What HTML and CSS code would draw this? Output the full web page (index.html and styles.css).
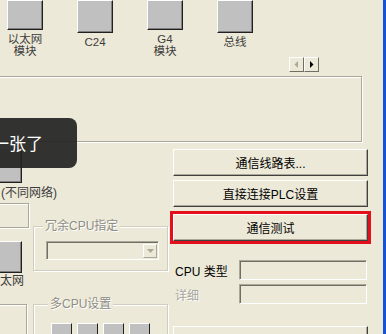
FILE: index.html
```html
<!DOCTYPE html>
<html>
<head>
<meta charset="UTF-8">
<title>通信设置</title>
<link rel="stylesheet" href="styles.css">
</head>
<body>

<div class="window">

	<div class="modules">
		<div class="module"><div class="chip"></div><div class="mod-label">以太网<br>模块</div></div>
		<div class="module"><div class="chip"></div><div class="mod-label">C24</div></div>
		<div class="module"><div class="chip"></div><div class="mod-label">G4<br>模块</div></div>
		<div class="module"><div class="chip"></div><div class="mod-label">总线</div></div>
	</div>

	<div class="scroller">
		<span class="sbtn"><svg width="5" height="7" viewBox="0 0 5 7"><path d="M4 0 L4 7 L0.5 3.5 Z" fill="#ACA899"/></svg></span>
		<span class="sbtn"><svg width="5" height="7" viewBox="0 0 5 7"><path d="M1 0 L1 7 L4.5 3.5 Z" fill="#000"/></svg></span>
	</div>

	<div class="panel"></div>

	<div class="lower">
		<div class="col-left">
			<div class="chip side-chip"></div>
			<div class="side-label">(不同网络)</div>
			<div class="side-frame"></div>
			<div class="chip side-chip2"></div>
			<div class="side-label2">以太网</div>
			<div class="side-frame frame2"></div>
		</div>

		<div class="col-mid">
			<div class="group">
				<span class="group-title">冗余CPU指定</span>
				<div class="combo"><span class="combo-btn"><svg width="7" height="4" viewBox="0 0 7 4"><path d="M0 0 L7 0 L3.5 4 Z" fill="#ACA899"/></svg></span></div>
			</div>
			<div class="group group2">
				<span class="group-title">多CPU设置</span>
				<div class="cpus">
					<span class="cpu"></span><span class="cpu"></span><span class="cpu"></span><span class="cpu"></span>
				</div>
			</div>
		</div>

		<div class="col-right">
			<button class="btn" type="button">通信线路表...</button>
			<button class="btn btn-gap1" type="button">直接连接PLC设置</button>
			<button class="btn btn-gap2 btn-mark" type="button">通信测试</button>
			<div class="field-row">
				<span class="field-label">CPU 类型</span>
				<span class="textbox"></span>
			</div>
			<div class="field-row row2">
				<span class="field-label off">详细</span>
				<span class="textbox"></span>
			</div>
			<button class="btn btn-last" type="button">系统图像</button>
		</div>
	</div>

	<div class="tip">一张了</div>

</div>

</body>
</html>
```

FILE: styles.css
```css
body {
	margin: 0;
	overflow: hidden;
	font-family: "Liberation Sans", "Noto Sans CJK SC", sans-serif;
	font-size: 12px;
}

.window {
	position: relative;
	width: 383px;
	height: 334px;
	background: #ECE9D8;
	border-right: 3px solid #1553D6;
	overflow: hidden;
}

/* top module strip */
.modules {
	display: flex;
	height: 57px;
	margin-left: -10px;
}

.module {
	width: 70px;
	display: flex;
	flex-direction: column;
	align-items: center;
}

.chip {
	box-sizing: border-box;
	width: 36px;
	height: 33px;
	background: #C0C0C0;
	border-top: 1px solid #fff;
	border-left: 1px solid #fff;
	border-right: 1px solid #202020;
	border-bottom: 1px solid #202020;
	box-shadow: inset -1px -1px 0 #808080;
}

.mod-label {
	margin-top: 3px;
	font-size: 11.5px;
	line-height: 12px;
	text-align: center;
	color: #3c3c3c;
}

.scroller {
	display: flex;
	justify-content: flex-end;
	height: 15px;
	padding-right: 64px;
}

.sbtn {
	box-sizing: border-box;
	width: 15px;
	height: 15px;
	display: flex;
	align-items: center;
	justify-content: center;
	background: #ECE9D8;
	border: 1px solid;
	border-color: #fff #716F64 #716F64 #fff;
}

.panel {
	box-sizing: border-box;
	width: 364px;
	height: 66px;
	margin: 4px 0 0 -2px;
	border: 1px solid #ACA899;
	box-shadow: inset 1px 1px 0 #fff, 1px 1px 0 #fff;
}

/* lower part */
.lower {
	display: flex;
	margin-top: 1px;
}

.col-left {
	width: 33px;
	flex-shrink: 0;
}

.side-chip {
	height: 35px;
	margin: 5px 0 0 -14px;
}

.side-label {
	margin: 4px 0 0 1px;
	line-height: 12px;
	white-space: nowrap;
	color: #3c3c3c;
}

.side-frame {
	box-sizing: border-box;
	width: 40px;
	height: 25px;
	margin: 4px 0 0 -11px;
	border: 1px solid #ACA899;
	box-shadow: inset 1px 1px 0 #fff, 1px 1px 0 #fff;
}

.side-chip2 {
	height: 32px;
	margin: 13px 0 0 -14px;
}

.side-label2 {
	margin: 2px 0 0 -12px;
	line-height: 12px;
	white-space: nowrap;
	color: #3c3c3c;
}

.frame2 {
	width: 38px;
	height: 40px;
	margin-top: 17px;
}

.col-mid {
	width: 135px;
	flex-shrink: 0;
}

.group {
	box-sizing: border-box;
	width: 135px;
	margin-top: 83px;
	padding: 0 7px 10px 12px;
	border: 1px solid #D0CDBE;
	box-shadow: inset 1px 1px 0 #fff, 1px 1px 0 #fff;
}

.group-title {
	display: block;
	width: fit-content;
	margin: -7px 0 0 -3px;
	padding: 0 2px;
	line-height: 12px;
	background: #ECE9D8;
	color: #8E8D85;
	text-shadow: 1px 1px 0 #fff;
}

.combo {
	box-sizing: border-box;
	width: 113px;
	height: 19px;
	margin-top: 9px;
	display: flex;
	justify-content: flex-end;
	align-items: center;
	padding-right: 1px;
	border: 1px solid;
	border-color: #ACA899 #fff #fff #ACA899;
	box-shadow: inset 1px 1px 0 #716F64;
}

.combo-btn {
	box-sizing: border-box;
	width: 14px;
	height: 14px;
	display: flex;
	align-items: center;
	justify-content: center;
	border: 1px solid;
	border-color: #fff #ACA899 #ACA899 #fff;
}

.group2 {
	margin-top: 33px;
	height: 60px;
	padding-left: 17px;
}

.cpus {
	display: flex;
	gap: 5px;
	margin-top: 13px;
}

.cpu {
	box-sizing: border-box;
	width: 21px;
	height: 24px;
	background: #C0C0C0;
	border-left: 1px solid #fff;
	border-top: 1px solid #fff;
	border-right: 1px solid #202020;
}

.col-right {
	width: 195px;
	padding-left: 5px;
	display: flex;
	flex-direction: column;
}

.btn {
	box-sizing: border-box;
	width: 195px;
	height: 27px;
	margin-top: 6px;
	padding: 0;
	font: inherit;
	color: #000;
	background: #ECE9D8;
	border: 1px solid;
	border-color: #fff #404040 #404040 #fff;
	box-shadow: inset -1px -1px 0 #ACA899;
}

.btn-gap1 {
	margin-top: 4px;
}

.btn-gap2 {
	margin-top: 7px;
}

.btn-mark {
	outline: 3px solid #E3101C;
}

.field-row {
	display: flex;
	align-items: center;
	margin-top: 19px;
}

.row2 {
	margin-top: 4px;
}

.field-label {
	width: 66px;
	padding-left: 2px;
	box-sizing: border-box;
	color: #000;
}

.off {
	color: #A7A69E;
	text-shadow: 1px 1px 0 #fff;
}

.textbox {
	box-sizing: border-box;
	width: 128px;
	height: 20px;
	border: 1px solid;
	border-color: #ACA899 #fff #fff #ACA899;
	box-shadow: inset 1px 1px 0 #716F64;
}

.btn-last {
	margin-top: 22px;
}

/* dark toast over the dialog */
.tip {
	position: absolute;
	left: -10px;
	top: 118px;
	width: 87px;
	height: 50px;
	box-sizing: border-box;
	padding-left: 2px;
	border-radius: 8px;
	background: rgba(36, 36, 34, 0.93);
	color: #fff;
	font-family: "Noto Sans CJK SC", sans-serif;
	font-size: 17px;
	line-height: 50px;
	white-space: nowrap;
}
```
